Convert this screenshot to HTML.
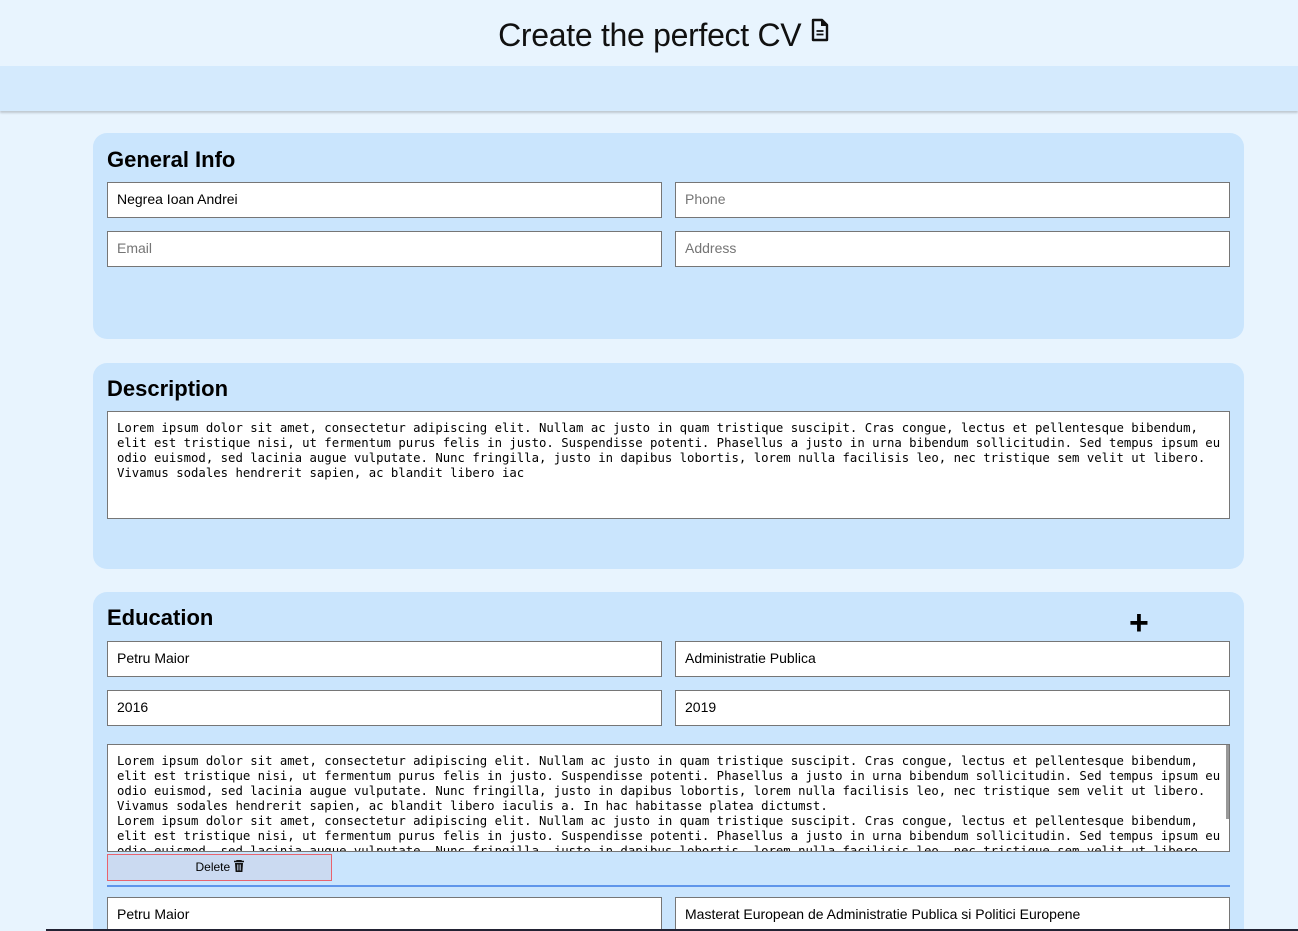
<!DOCTYPE html>
<html><head><meta charset="utf-8"><style>
*{box-sizing:border-box;margin:0;padding:0}
html,body{width:1298px;height:931px;overflow:hidden}
body{background:#e8f4fe;font-family:"Liberation Sans",sans-serif;position:relative}
.hdr{height:66px;text-align:center;font-size:32px;color:#111;line-height:70px;letter-spacing:-0.3px;padding-left:30px}
.band{height:45px;background:#d4eafd;box-shadow:0 2px 2px rgba(0,0,0,.18)}
.card{position:absolute;left:93px;width:1151px;background:#cae5fd;border-radius:14px}
.card h2{position:absolute;left:14px;font-size:22px;font-weight:bold;color:#000}
.in{position:absolute;width:555px;height:36px;background:#fff;border:1px solid #767676;font-size:14px;line-height:33px;padding-left:9px;color:#000}
.ph{color:#757575}
.ta{position:absolute;left:14px;width:1123px;background:#fff;border:1px solid #767676;font-family:"DejaVu Sans Mono","Liberation Mono",monospace;font-size:12.3px;line-height:15px;padding:9px 9px;white-space:pre;overflow:hidden;color:#000}
</style></head><body>
<div class="hdr">Create the perfect CV <svg width="20" height="24" viewBox="0 0 20 24" style="vertical-align:4px"><path d="M3 2h9l5 5v15H3z" fill="none" stroke="#111" stroke-width="2.4" stroke-linejoin="round"/><path d="M11 2v6h6" fill="#111"/><path d="M6.5 13h7M6.5 16.5h7" stroke="#111" stroke-width="1.8"/></svg></div>
<div class="band"></div>

<div class="card" style="top:133px;height:206px">
<h2 style="top:14px">General Info</h2>
<div class="in" style="left:14px;top:49px">Negrea Ioan Andrei</div>
<div class="in ph" style="left:582px;top:49px">Phone</div>
<div class="in ph" style="left:14px;top:98px">Email</div>
<div class="in ph" style="left:582px;top:98px">Address</div>
</div>

<div class="card" style="top:363px;height:206px">
<h2 style="top:13px">Description</h2>
<div class="ta" style="top:48px;height:108px">Lorem ipsum dolor sit amet, consectetur adipiscing elit. Nullam ac justo in quam tristique suscipit. Cras congue, lectus et pellentesque bibendum,
elit est tristique nisi, ut fermentum purus felis in justo. Suspendisse potenti. Phasellus a justo in urna bibendum sollicitudin. Sed tempus ipsum eu
odio euismod, sed lacinia augue vulputate. Nunc fringilla, justo in dapibus lobortis, lorem nulla facilisis leo, nec tristique sem velit ut libero.
Vivamus sodales hendrerit sapien, ac blandit libero iac</div>
</div>

<div class="card" style="top:592px;height:339px;border-radius:14px 14px 0 0">
<h2 style="top:13px">Education</h2>
<div style="position:absolute;left:1036px;top:16px;font-size:34px;line-height:30px;font-weight:bold">+</div>
<div class="in" style="left:14px;top:49px">Petru Maior</div>
<div class="in" style="left:582px;top:49px">Administratie Publica</div>
<div class="in" style="left:14px;top:98px">2016</div>
<div class="in" style="left:582px;top:98px">2019</div>
<div class="ta" style="top:152px;height:108px;padding-top:9px">Lorem ipsum dolor sit amet, consectetur adipiscing elit. Nullam ac justo in quam tristique suscipit. Cras congue, lectus et pellentesque bibendum,
elit est tristique nisi, ut fermentum purus felis in justo. Suspendisse potenti. Phasellus a justo in urna bibendum sollicitudin. Sed tempus ipsum eu
odio euismod, sed lacinia augue vulputate. Nunc fringilla, justo in dapibus lobortis, lorem nulla facilisis leo, nec tristique sem velit ut libero.
Vivamus sodales hendrerit sapien, ac blandit libero iaculis a. In hac habitasse platea dictumst.
Lorem ipsum dolor sit amet, consectetur adipiscing elit. Nullam ac justo in quam tristique suscipit. Cras congue, lectus et pellentesque bibendum,
elit est tristique nisi, ut fermentum purus felis in justo. Suspendisse potenti. Phasellus a justo in urna bibendum sollicitudin. Sed tempus ipsum eu
odio euismod, sed lacinia augue vulputate. Nunc fringilla, justo in dapibus lobortis, lorem nulla facilisis leo, nec tristique sem velit ut libero.</div>
<div style="position:absolute;left:1133px;top:153px;width:3px;height:74px;background:#999"></div>
<div style="position:absolute;left:14px;top:262px;width:225px;height:27px;background:#cbdaf1;border:1px solid #e8636e;font-size:12px;line-height:25px;text-align:center">Delete <svg width="10" height="12" viewBox="0 0 10 12" style="vertical-align:-1px"><path d="M0 1.5h10M3 1.5V0h4v1.5" stroke="#111" stroke-width="1.4" fill="none"/><path d="M1 3h8l-.6 9H1.6z" fill="#111"/><path d="M3.5 4.5v6M5 4.5v6M6.5 4.5v6" stroke="#cbdaf1" stroke-width=".7"/></svg></div>
<div style="position:absolute;left:14px;top:293px;width:1123px;height:2px;background:#5f95ea"></div>
<div class="in" style="left:14px;top:305px">Petru Maior</div>
<div class="in" style="left:582px;top:305px">Masterat European de Administratie Publica si Politici Europene</div>
</div>
<div style="position:absolute;left:46px;top:929px;width:1252px;height:2px;background:#223"></div>
</body></html>
